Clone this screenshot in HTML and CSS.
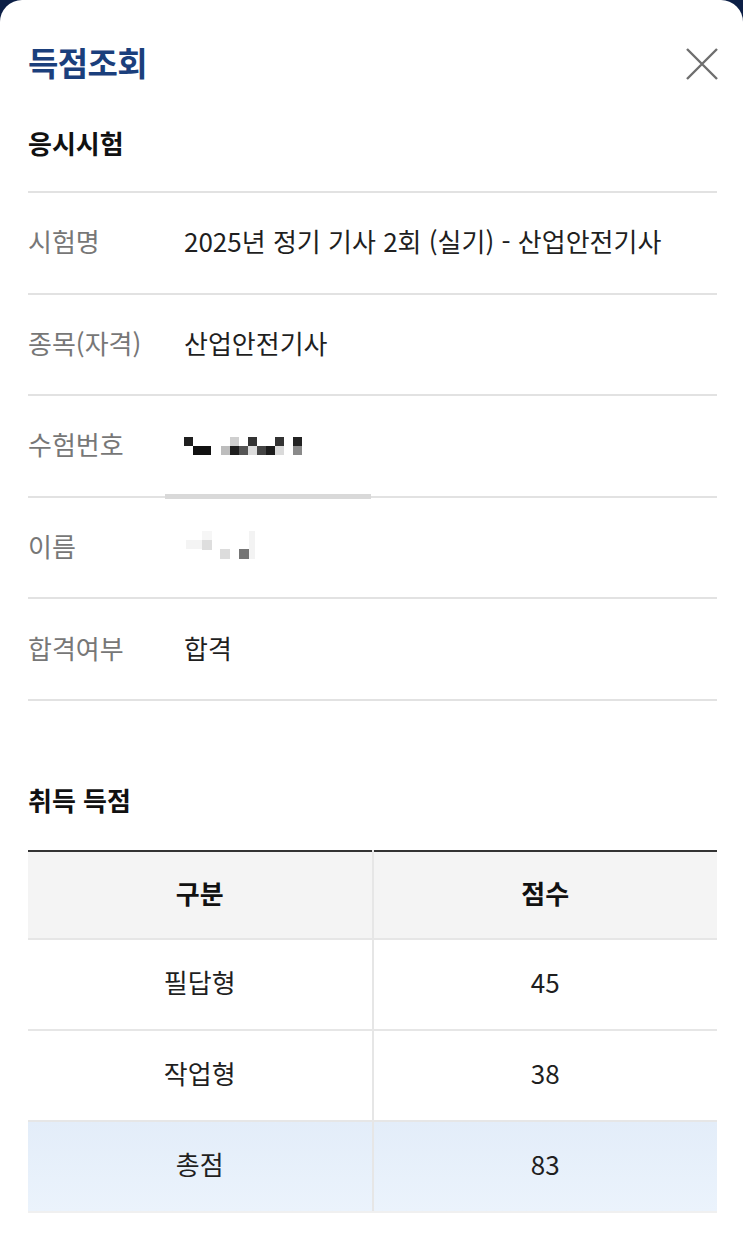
FILE: index.html
```html
<!DOCTYPE html>
<html lang="ko">
<head>
<meta charset="utf-8">
<title>득점조회</title>
<link rel="stylesheet" href="styles.css">
</head>
<body>
<div class="sheet">
  <header class="head">
    <h1 class="title">득점조회</h1>
    <button class="close" aria-label="닫기">
      <svg width="34" height="34" viewBox="0 0 34 34"><path d="M2 2L32 32M32 2L2 32" stroke="#6e6e6e" stroke-width="2.4" fill="none"/></svg>
    </button>
  </header>

  <h2 class="section">응시시험</h2>
  <dl class="info">
    <div class="row"><dt>시험명</dt><dd>2025년 정기 기사 2회 (실기) - 산업안전기사</dd></div>
    <div class="row"><dt>종목(자격)</dt><dd>산업안전기사</dd></div>
    <div class="row row-mark"><dt>수험번호</dt><dd>
      <svg class="mosaic" width="120" height="20" viewBox="182 436 120 20">
        <rect x="182" y="436" width="9" height="9" fill="#1f1f1f"/>
        <rect x="191" y="445" width="18" height="9" fill="#111"/>
        <rect x="219" y="445" width="9" height="9" fill="#bdbdbd"/>
        <rect x="228" y="436" width="9" height="9" fill="#cfcfcf"/>
        <rect x="228" y="445" width="9" height="9" fill="#1e1e1e"/>
        <rect x="237" y="445" width="9" height="9" fill="#555"/>
        <rect x="246" y="436" width="9" height="9" fill="#333"/>
        <rect x="246" y="445" width="9" height="9" fill="#dcdcdc"/>
        <rect x="255" y="445" width="9" height="9" fill="#444"/>
        <rect x="264" y="445" width="9" height="9" fill="#1c1c1c"/>
        <rect x="273" y="436" width="9" height="9" fill="#333"/>
        <rect x="273" y="445" width="9" height="9" fill="#dadada"/>
        <rect x="291" y="436" width="9" height="9" fill="#222"/>
        <rect x="291" y="445" width="9" height="9" fill="#8a8a8a"/>
      </svg>
    </dd><span class="smear"></span></div>
    <div class="row"><dt>이름</dt><dd>
      <svg class="mosaic" width="80" height="30" viewBox="182 528 80 30">
        <rect x="184" y="537" width="16" height="9" fill="#f4f4f4"/>
        <rect x="200" y="528" width="10" height="9" fill="#f6f6f6"/>
        <rect x="200" y="537" width="10" height="10" fill="#dedede"/>
        <rect x="218" y="546" width="10" height="10" fill="#dcdcdc"/>
        <rect x="237" y="546" width="10" height="10" fill="#757575"/>
        <rect x="247" y="528" width="6" height="28" fill="#f3f3f3"/>
      </svg>
    </dd></div>
    <div class="row"><dt>합격여부</dt><dd>합격</dd></div>
  </dl>

  <h2 class="section section-score">취득 득점</h2>
  <table class="score">
    <thead>
      <tr><th>구분</th><th>점수</th></tr>
    </thead>
    <tbody>
      <tr><td>필답형</td><td>45</td></tr>
      <tr><td>작업형</td><td>38</td></tr>
      <tr class="total"><td>총점</td><td>83</td></tr>
    </tbody>
  </table>
</div>
</body>
</html>
```
FILE: styles.css
```css
* { box-sizing: border-box; }
html, body { margin: 0; padding: 0; }
body {
  background: #0c1f46;
  font-family: "Noto Sans CJK KR", "Noto Sans", sans-serif;
  color: #1a1a1a;
}
.sheet {
  background: #fff;
  border-radius: 22px 22px 0 0;
  min-height: 1246px;
  padding: 40px 26px 0 28px;
}
.head {
  display: flex;
  align-items: center;
  justify-content: space-between;
  height: 48px;
}
.title {
  margin: 0;
  font-size: 33px;
  line-height: 48px;
  font-weight: 700;
  color: #1b3f7c;
  letter-spacing: -0.6px;
  position: relative;
  top: -2px;
}
.close {
  border: 0;
  background: none;
  padding: 0;
  margin-right: -2px;
  width: 34px;
  height: 34px;
  display: flex;
}
.section {
  margin: 38px 0 31px;
  font-size: 26px;
  line-height: 34px;
  font-weight: 700;
  color: #111;
}
.info {
  margin: 0;
  border-top: 2px solid #e2e2e2;
}
.row {
  position: relative;
  display: flex;
  align-items: center;
  height: 101.6px;
  padding-bottom: 4px;
  border-bottom: 2px solid #e2e2e2;
}
.row dt {
  width: 156px;
  flex: none;
  font-size: 26px;
  color: #777;
}
.row dd {
  margin: 0;
  font-size: 26px;
  color: #1f1f1f;
  display: flex;
  align-items: center;
}
.mosaic { display: block; }
.row-mark .mosaic { margin-top: 6px; }
.smear {
  position: absolute;
  left: 137px;
  bottom: -3px;
  width: 206px;
  height: 5px;
  background: #d9d9d9;
}
.section-score {
  margin: 82px 0 33px;
}
.score {
  width: 100%;
  border-collapse: collapse;
  border-top: 2px solid #333;
  table-layout: fixed;
}
.score th, .score td {
  text-align: center;
  font-size: 26px;
  padding: 0 0 5px;
  border-bottom: 2px solid #e6e6e6;
}
.score th + th, .score td + td {
  border-left: 2px solid #e6e6e6;
}
.score th {
  height: 88px;
  background: #f4f4f4;
  font-weight: 700;
  color: #111;
}
.score td {
  height: 91px;
  font-weight: 400;
  color: #1f1f1f;
}
.score .total td {
  background: linear-gradient(#e3edf9, #ebf3fc);
  border-bottom-color: #f0f0f0;
}
```
